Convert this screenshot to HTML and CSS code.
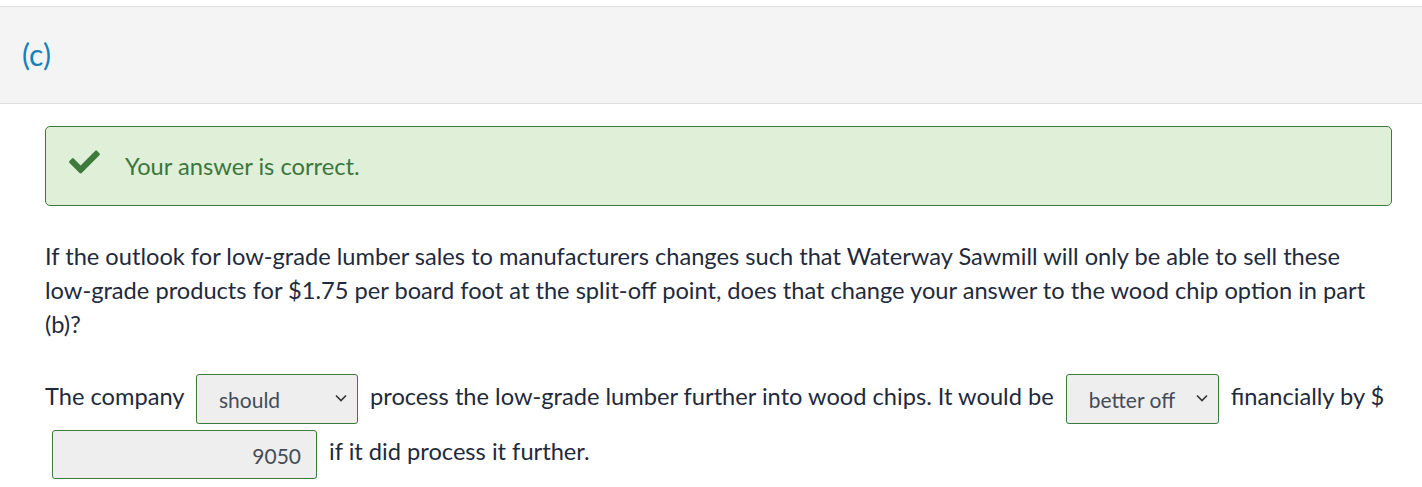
FILE: index.html
```html
<!DOCTYPE html>
<html lang="en">
<head>
<meta charset="utf-8">
<title>Part (c)</title>
<link rel="stylesheet" href="styles.css">
</head>
<body>
<div class="part-header"><span class="part-label">(c)</span></div>
<div class="part-body">
  <div class="feedback">
    <svg class="check" viewBox="0 0 512 400" width="31" height="24" aria-hidden="true"><path d="M173.9 383.4l-166.4-166.4c-10-10-10-26.2 0-36.2l36.2-36.2c10-10 26.2-10 36.2 0L192 256.7 432.1 16.6c10-10 26.2-10 36.2 0l36.2 36.2c10 10 10 26.2 0 36.2l-294.4 294.4c-10 10-26.2 10-36.2 0z"/></svg>
    <span class="feedback-text">Your answer is correct.</span>
  </div>
  <p class="question">If the outlook for low-grade lumber sales to manufacturers changes such that Waterway Sawmill will only be able to sell these low-grade products for $1.75 per board foot at the split-off point, does that change your answer to the wood chip option in part (b)?</p>
  <p class="answer">The company <span class="select sel-should"><span class="sel-text">should</span><svg class="chev" viewBox="0 0 12 8" width="12" height="8"><path d="M1 1.5l5 5 5-5" fill="none" stroke="#333" stroke-width="1.6"/></svg></span> process the low-grade lumber further into wood chips. It would be <span class="select sel-better"><span class="sel-text">better off</span><svg class="chev" viewBox="0 0 12 8" width="12" height="8"><path d="M1 1.5l5 5 5-5" fill="none" stroke="#333" stroke-width="1.6"/></svg></span> financially by $ <span class="num-input">9050</span> if it did process it further.</p>
</div>
</body>
</html>
```
FILE: styles.css
```css
html, body {
  margin: 0;
  padding: 0;
  background: #ffffff;
}
body {
  font-family: Lato, "Open Sans", Arial, sans-serif;
  color: #1f2a3c;
  padding-top: 6px;
}
.part-header {
  background: #f4f4f4;
  border-top: 1px solid #dddddd;
  border-bottom: 1px solid #dddddd;
  height: 96px;
  display: flex;
  align-items: center;
  padding-left: 22px;
}
.part-label {
  color: #1580b8;
  font-size: 30px;
  line-height: 1;
  position: relative;
  top: -1px;
}
.part-body {
  padding: 22px 30px 0 45px;
}
.feedback {
  background: #dfefd8;
  border: 1px solid #3c7a3c;
  border-radius: 5px;
  height: 78px;
  display: flex;
  align-items: center;
  padding-left: 23px;
}
.check {
  fill: #3d7a3c;
  margin-right: 25px;
  position: relative;
  top: -4px;
}
.feedback-text {
  color: #3c763d;
  font-size: 23.7px;
}
.question {
  font-size: 23.65px;
  line-height: 34px;
  margin: 33px 0 0 0;
}
.answer {
  font-size: 23.65px;
  line-height: 55px;
  margin: 28px -12px 0 0;
}
.select, .num-input {
  display: inline-flex;
  align-items: center;
  box-sizing: border-box;
  height: 50px;
  background: #eeeeee;
  border: 1px solid #3c7a3c;
  border-radius: 3px;
  vertical-align: middle;
  font-size: 21px;
  color: #454c57;
  margin: 0 6px;
  line-height: 1;
}
.select {
  justify-content: space-between;
  padding: 0 10px 0 22px;
}
.sel-should { width: 162px; }
.sel-better { width: 153px; }
.chev {
  flex: none;
  position: relative;
  top: -1px;
}
.num-input {
  width: 265px;
  height: 49px;
  justify-content: flex-end;
  padding: 2px 15px 0 0;
  margin-left: 7px;
}
```
